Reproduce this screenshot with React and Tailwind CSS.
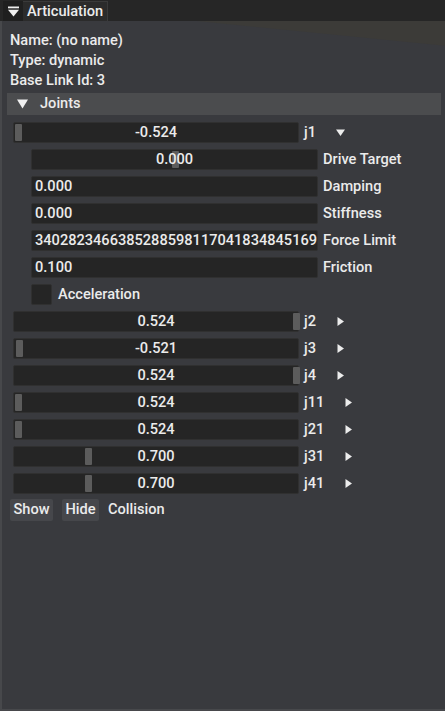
import React from "react";

const joints = [
  { name: "j1", value: "-0.524", grab: 1, open: true },
  { name: "j2", value: "0.524", grab: 279 },
  { name: "j3", value: "-0.521", grab: 2 },
  { name: "j4", value: "0.524", grab: 279 },
  { name: "j11", value: "0.524", grab: 1 },
  { name: "j21", value: "0.524", grab: 1 },
  { name: "j31", value: "0.700", grab: 71 },
  { name: "j41", value: "0.700", grab: 71 },
];

const fields = [
  { label: "Damping", value: "0.000" },
  { label: "Stiffness", value: "0.000" },
  { label: "Force Limit", value: "340282346638528859811704183484516925440.000" },
  { label: "Friction", value: "0.100" },
];

function Slider({ value, grab, width }) {
  return (
    <div
      className="relative h-[21px] shrink-0 rounded-[2px] border border-[#303030] bg-[#252525]"
      style={{ width }}
    >
      <div className="absolute top-[1px] h-[17px] w-[7px] rounded-[1px] bg-[#5c5c5c]" style={{ left: grab }} />
      <div className="relative text-center leading-[19px]">{value}</div>
    </div>
  );
}

function Arrow({ down }) {
  return (
    <svg width="9" height="9" viewBox="0 0 9 9" className="shrink-0">
      {down ? <path d="M0 1.5 H9 L4.5 8 Z" fill="#ececec" /> : <path d="M1.5 0 V9 L8 4.5 Z" fill="#ececec" />}
    </svg>
  );
}

function JointRow({ j }) {
  return (
    <div className="flex h-[21px] items-center">
      <div className="ml-[11px]">
        <Slider value={j.value} grab={j.grab} width={286} />
      </div>
      <span className="ml-[5px]">{j.name}</span>
      <span className="ml-[20px] flex items-center">
        <Arrow down={j.open} />
      </span>
    </div>
  );
}

export default function App() {
  return (
    <div
      className="relative flex h-[711px] w-[445px] flex-col overflow-hidden bg-[#262626] text-[14.6px] font-medium text-[#ebebeb]"
      style={{ fontFamily: "Roboto, 'Liberation Sans', sans-serif" }}
    >
      <div className="flex h-[21px] shrink-0 items-end">
        <div className="ml-[3px] flex h-[20px] w-[20px] items-center justify-center bg-[#1f1f1f]">
          <svg width="11" height="11" viewBox="0 0 11 11">
            <rect x="0" y="0.5" width="11" height="1.8" fill="#f0f0f0" />
            <path d="M0 3.8 H11 L5.5 10.5 Z" fill="#f0f0f0" />
          </svg>
        </div>
        <div className="flex h-[20px] items-center border-r border-t border-[#3a3a3a] bg-[#2b2b2b] pl-[4px] pr-[4px] leading-none">
          Articulation
        </div>
      </div>

      <div className="relative flex flex-1 flex-col border-b-2 border-l-2 border-[#47484b] bg-[#393a3e]">
        <svg className="absolute left-0 top-0" width="445" height="30">
          <polygon points="195,0 445,0 445,25" fill="#3c3b38" />
        </svg>

        <div className="relative flex flex-col pt-[9px]">
          <div className="ml-[8px] h-[20px] leading-[20px]">Name: (no name)</div>
          <div className="ml-[8px] h-[20px] leading-[20px]">Type: dynamic</div>
          <div className="ml-[8px] h-[20px] leading-[20px]">Base Link Id: 3</div>

          <div className="ml-[5px] mt-[3px] flex h-[22px] w-[434px] items-center bg-[#4b4c4e]">
            <span className="ml-[10px] flex items-center">
              <svg width="11" height="10" viewBox="0 0 11 10">
                <path d="M0 0.5 H11 L5.5 9.5 Z" fill="#f0f0f0" />
              </svg>
            </span>
            <span className="ml-[12px]">Joints</span>
          </div>

          <div className="mt-[7px] flex flex-col gap-[6px]">
            <JointRow j={joints[0]} />

            <div className="flex h-[21px] items-center">
              <div className="ml-[29px]">
                <Slider value="0.000" grab={140} width={287} />
              </div>
              <span className="ml-[5px]">Drive Target</span>
            </div>

            {fields.map((f) => (
              <div key={f.label} className="flex h-[21px] items-center">
                <div className="ml-[29px] h-[21px] w-[287px] shrink-0 overflow-hidden whitespace-nowrap rounded-[2px] border border-[#303030] bg-[#252525] pl-[3px] leading-[19px]">
                  {f.value}
                </div>
                <span className="ml-[5px]">{f.label}</span>
              </div>
            ))}

            <div className="flex h-[21px] items-center">
              <div className="ml-[29px] h-[21px] w-[21px] rounded-[2px] border border-[#303030] bg-[#252525]" />
              <span className="ml-[6px]">Acceleration</span>
            </div>

            {joints.slice(1).map((j) => (
              <JointRow key={j.name} j={j} />
            ))}

            <div className="-mt-[1px] flex h-[22px] items-center">
              <div className="ml-[8px] flex h-[22px] w-[43px] items-center justify-center rounded-[2px] bg-[#46474b]">Show</div>
              <div className="ml-[9px] flex h-[22px] w-[37px] items-center justify-center rounded-[2px] bg-[#46474b]">Hide</div>
              <span className="ml-[9px]">Collision</span>
            </div>
          </div>
        </div>
      </div>
    </div>
  );
}
